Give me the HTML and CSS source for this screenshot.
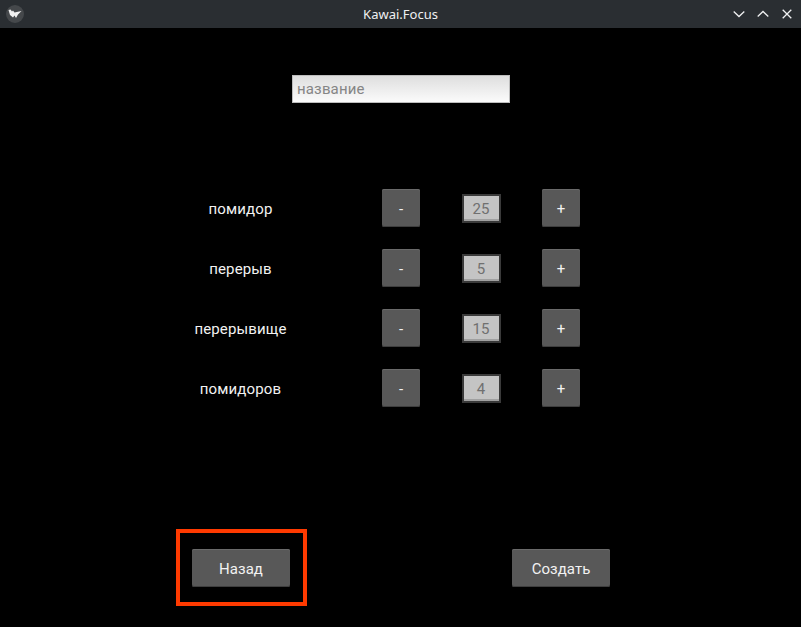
FILE: index.html
```html
<!DOCTYPE html>
<html lang="ru">
<head>
<meta charset="utf-8">
<title>Kawai.Focus</title>
<link rel="stylesheet" href="styles.css">
</head>
<body>
<header class="titlebar">
  <div class="app-icon">
    <svg width="14" height="10" viewBox="0 0 14 10"><path d="M0.5 1 L2.5 0.5 L4 2.5 L5 1.5 L6.5 3.5 L13.5 2 L10 5.5 L8 9 L6.5 6.5 L5 8.5 L2 6 Z" fill="#f0f0f0"/></svg>
  </div>
  <div class="title">Kawai.Focus</div>
  <div class="win-controls">
    <svg class="win-icon" width="12" height="8" viewBox="0 0 12 8"><path d="M0.7 1.5 L6 6.5 L11.3 1.5" /></svg>
    <svg class="win-icon" width="12" height="8" viewBox="0 0 12 8"><path d="M0.7 6.5 L6 1.5 L11.3 6.5" /></svg>
    <svg class="win-icon win-close" width="10" height="10" viewBox="0 0 10 10"><path d="M0.7 0.7 L9.3 9.3 M9.3 0.7 L0.7 9.3" /></svg>
  </div>
</header>
<main class="content">
  <div class="name-row">
    <input class="name-input" type="text" placeholder="название">
  </div>
  <section class="settings">
    <div class="label">помидор</div>
    <div class="cell"><button class="btn small">-</button></div>
    <div class="cell value-cell"><div class="value">25</div></div>
    <div class="cell"><button class="btn small">+</button></div>

    <div class="label">перерыв</div>
    <div class="cell"><button class="btn small">-</button></div>
    <div class="cell value-cell"><div class="value">5</div></div>
    <div class="cell"><button class="btn small">+</button></div>

    <div class="label">перерывище</div>
    <div class="cell"><button class="btn small">-</button></div>
    <div class="cell value-cell"><div class="value">15</div></div>
    <div class="cell"><button class="btn small">+</button></div>

    <div class="label">помидоров</div>
    <div class="cell"><button class="btn small">-</button></div>
    <div class="cell value-cell"><div class="value">4</div></div>
    <div class="cell"><button class="btn small">+</button></div>
  </section>
  <div class="actions">
    <div class="highlight"><button class="btn wide">Назад</button></div>
    <button class="btn wide create">Создать</button>
  </div>
</main>
</body>
</html>
```
FILE: styles.css
```css
html, body {
  margin: 0;
  padding: 0;
  height: 100%;
  background: #000;
  overflow: hidden;
}
body {
  font-family: Roboto, sans-serif;
  font-size: 15px;
  color: #f2f2f2;
}
.titlebar {
  height: 28px;
  background: #2a2e32;
  display: flex;
  align-items: center;
  position: relative;
  box-sizing: border-box;
}
.app-icon {
  width: 18px;
  height: 18px;
  margin-left: 6px;
  border-radius: 50%;
  background: #45484b;
  display: flex;
  align-items: center;
  justify-content: center;
}
.title {
  position: absolute;
  left: 0;
  right: 0;
  text-align: center;
  font-family: "Noto Sans", sans-serif;
  font-size: 13px;
  color: #eff0f1;
}
.win-controls {
  margin-left: auto;
  margin-right: 9px;
  display: flex;
  align-items: center;
  gap: 12px;
}
.win-close {
  margin-left: 1px;
}
.win-icon path {
  fill: none;
  stroke: #eff0f1;
  stroke-width: 1.3;
}
.content {
  display: flex;
  flex-direction: column;
}
.name-row {
  display: flex;
  justify-content: flex-start;
  padding: 47px 0 0 292px;
}
.name-input {
  width: 218px;
  height: 28px;
  box-sizing: border-box;
  border: 1px solid #bdbdbd;
  padding: 0 4px;
  margin: 0;
  outline: none;
  border-radius: 0;
  font-family: Roboto, sans-serif;
  font-size: 15px;
  letter-spacing: 0.15px;
  background: linear-gradient(#dedede, #fbfbfb);
  color: #808080;
}
.name-input::placeholder {
  color: #858585;
  opacity: 1;
}
.settings {
  display: grid;
  grid-template-columns: 240px 80px 80px 80px;
  grid-auto-rows: 60px;
  margin: 76px 0 0 121px;
  width: 480px;
}
.label, .cell {
  display: flex;
  align-items: center;
  justify-content: center;
}
.label {
  letter-spacing: 0.15px;
  padding-right: 1px;
}
.cell {
  padding-bottom: 2px;
  box-sizing: border-box;
}
.value-cell {
  padding-bottom: 1px;
}
.btn {
  margin: 0;
  padding: 1px 0 0;
  box-sizing: border-box;
  border: none;
  border-radius: 2px;
  background: #585858;
  box-shadow: inset 0 1px 0 #6a6a6a, inset 0 -1px 0 #3e3e3e;
  color: #f2f2f2;
  font-family: Roboto, sans-serif;
  font-size: 15px;
  letter-spacing: 0.05px;
}
.btn.small {
  width: 38px;
  height: 38px;
}
.btn.wide {
  width: 98px;
  height: 38px;
}
.value {
  width: 39px;
  height: 29px;
  box-sizing: border-box;
  border: 2px solid #3a3a3a;
  background: #c4c4c4;
  box-shadow: inset 0 -2px 0 #a0a0a0;
  color: #707070;
  display: flex;
  align-items: center;
  justify-content: center;
}
.actions {
  display: flex;
  align-items: center;
  margin: 110px 0 0 176px;
}
.highlight {
  box-sizing: border-box;
  width: 131px;
  height: 77px;
  border: 4px solid #ff3a00;
  padding: 16px 13px 15px 12px;
}
.create {
  margin-left: 205px;
  margin-top: 1px;
}
```
